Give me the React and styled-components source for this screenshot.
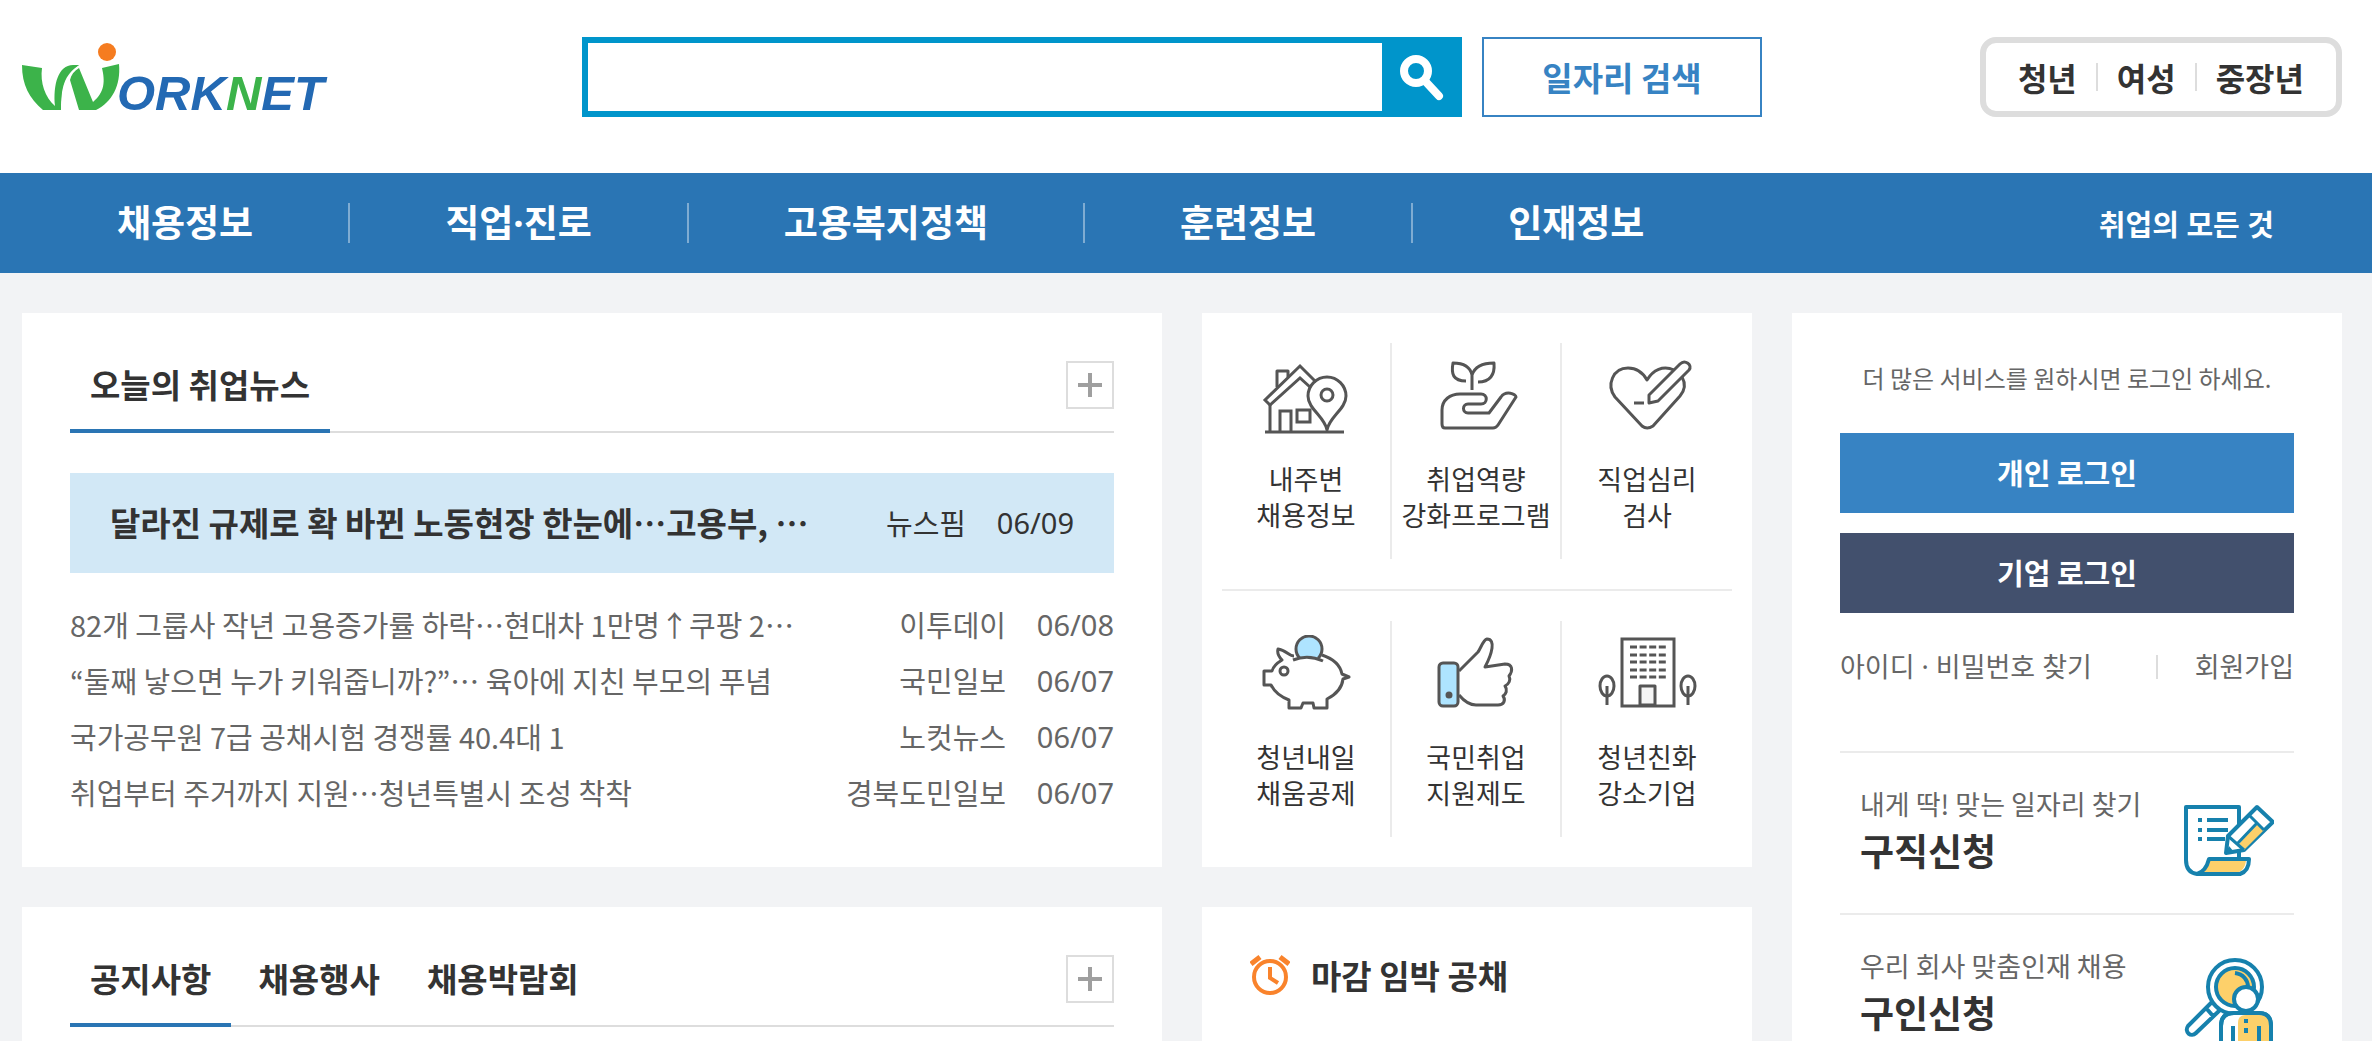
import React, { useState } from "react";
import styled, { createGlobalStyle } from "styled-components";

const GlobalStyle = createGlobalStyle`
  * {
    box-sizing: border-box;
  }

  body {
    margin: 0;
    background: #f2f3f5;
    font-family: "Noto Sans CJK KR", "Noto Sans", sans-serif;
    color: #333333;
  }

  ul, p, h1, h2 {
    margin: 0;
    padding: 0;
    list-style: none;
  }

  a {
    color: inherit;
    text-decoration: none;
  }

  button, input {
    font-family: inherit;
    margin: 0;
    padding: 0;
    border-radius: 0;
  }

  svg {
    display: block;
  }
`;

// narrow middle dots and western digits
const latinFirst = `"Noto Sans", "Noto Sans CJK KR", sans-serif`;

const StyledPage = styled.div`
  display: flex;
  flex-direction: column;
  height: 100vh;
  overflow: hidden;
`;

const StyledHeader = styled.header`
  display: flex;
  flex-shrink: 0;
  align-items: flex-start;
  padding: 37px 30px 56px 22px;
  background: #ffffff;
`;

const StyledLogoLink = styled.a`
  flex: 0 1 560px;
  padding-top: 6px;
`;

const StyledSearchForm = styled.form`
  display: flex;
  flex: 0 1 880px;
  height: 80px;
  margin-right: 20px;
`;

const StyledSearchInput = styled.input`
  flex: 1;
  min-width: 0;
  border: 6px solid #0095cb;
  border-right: 0;
  padding: 0 20px;
  font-size: 33px;
  background: #ffffff;
`;

const StyledSearchButton = styled.button`
  display: flex;
  align-items: center;
  justify-content: center;
  width: 80px;
  border: 0;
  background: #0095cb;
`;

const StyledJobSearchButton = styled.button`
  width: 280px;
  height: 80px;
  border: 2px solid #3783c3;
  background: #ffffff;
  font-size: 33px;
  font-weight: 700;
  color: #3783c3;
`;

const StyledAgeMenu = styled.ul`
  display: flex;
  align-items: center;
  height: 80px;
  margin-left: auto;
  padding: 0 13px;
  border: 6px solid #dddddd;
  border-radius: 16px;
`;

const StyledAgeItem = styled.li`
  padding: 0 19px;
  border-left: ${({ $first }) => ($first ? "0" : "2px solid #dddddd")};
  font-size: 32px;
  font-weight: 700;
  line-height: 28px;
`;

const StyledNav = styled.nav`
  display: flex;
  flex-shrink: 0;
  align-items: center;
  height: 100px;
  padding: 0 30px 0 22px;
  background: #2a75b4;
  color: #ffffff;
  font-family: ${latinFirst};
  font-weight: 700;
`;

const StyledNavList = styled.ul`
  display: flex;
`;

const StyledNavItem = styled.li`
  padding: 0 95px;
  border-left: ${({ $first }) => ($first ? "0" : "2px solid #7facd2")};
  font-size: 37px;
  line-height: 40px;
`;

const StyledNavAll = styled.a`
  margin-left: auto;
  padding-right: 68px;
  font-size: 29px;
`;

const StyledMain = styled.main`
  display: grid;
  flex: 1;
  grid-template-columns: 1140fr 550fr 550fr;
  grid-template-rows: auto 1fr;
  gap: 40px;
  padding: 40px 30px 0 22px;
`;

const StyledCard = styled.section`
  min-width: 0;
  padding: ${({ $padding }) => $padding || "0 48px"};
  background: #ffffff;
`;

const StyledTabBar = styled.div`
  display: flex;
  align-items: flex-end;
  height: 120px;
  border-bottom: 2px solid #dddddd;
`;

const StyledTabs = styled.div`
  display: flex;
  gap: 7px;
  margin-bottom: -2px;
`;

const StyledTab = styled.button`
  height: 92px;
  padding: 0 20px 2px;
  border: 0;
  border-bottom: 4px solid ${({ $active }) => ($active ? "#2a75b4" : "transparent")};
  background: none;
  font-size: 33px;
  font-weight: 700;
  color: #333333;
`;

const StyledMoreButton = styled.button`
  display: flex;
  align-items: center;
  justify-content: center;
  width: 48px;
  height: 48px;
  margin-left: auto;
  margin-bottom: 22px;
  border: 2px solid #dddddd;
  background: #ffffff;
`;

const StyledHeadline = styled.a`
  display: flex;
  align-items: center;
  height: 100px;
  margin-top: 40px;
  padding: 0 40px 2px;
  background: #d2e8f6;
  color: #333333;
`;

const StyledHeadlineTitle = styled.strong`
  flex: 1;
  min-width: 0;
  font-size: 33px;
  font-weight: 700;
  white-space: nowrap;
`;

const StyledNewsList = styled.ul`
  padding: 23px 0 47px;
  color: #666666;
`;

const StyledNewsRow = styled.a`
  display: flex;
  align-items: center;
  height: 56px;
`;

const StyledNewsTitle = styled.span`
  flex: 1;
  min-width: 0;
  font-size: 29px;
  white-space: nowrap;
`;

const StyledNewsSource = styled.span`
  font-size: 29px;
  white-space: nowrap;
`;

const StyledNewsDate = styled.span`
  width: 108px;
  font-family: ${latinFirst};
  font-size: 29px;
  text-align: right;
`;

const StyledServiceRow = styled.ul`
  display: grid;
  grid-template-columns: repeat(3, 1fr);

  & + & {
    margin-top: 30px;
    padding-top: 30px;
    border-top: 2px solid #ebebeb;
  }
`;

const StyledService = styled.li`
  height: 216px;
  padding-top: 14px;
  border-right: ${({ $last }) => ($last ? "0" : "2px solid #ebebeb")};
  font-size: 27px;
  line-height: 36px;
  text-align: center;
  white-space: pre-line;

  svg {
    margin: 0 auto 24px;
  }
`;

const StyledDeadlineTitle = styled.h2`
  display: flex;
  align-items: center;
  gap: 21px;
  font-size: 33px;
  font-weight: 700;
  line-height: 48px;
`;

const StyledAside = styled(StyledCard)`
  grid-column: 3;
  grid-row: 1 / span 2;
`;

const StyledLoginText = styled.p`
  padding-top: 45px;
  margin-bottom: 35px;
  font-size: 24px;
  line-height: 40px;
  text-align: center;
  white-space: nowrap;
  color: #666666;
`;

const StyledLoginButton = styled.button`
  display: block;
  width: 100%;
  height: 80px;
  margin-bottom: 20px;
  padding-bottom: 2px;
  border: 0;
  background: ${({ $color }) => $color};
  font-size: 29px;
  font-weight: 700;
  color: #ffffff;
`;

const StyledLoginLinks = styled.div`
  display: flex;
  justify-content: space-between;
  margin-top: 42px;
  padding-bottom: 72px;
  font-family: ${latinFirst};
  font-size: 27px;
  line-height: 24px;
  color: #666666;
`;

const StyledJoinLink = styled.a`
  padding-left: 37px;
  border-left: 2px solid #dddddd;
`;

const StyledApply = styled.a`
  display: flex;
  justify-content: space-between;
  padding: 31px 20px 33px;
  border-top: 2px solid #ebebeb;

  svg {
    margin-top: 12px;
  }
`;

const StyledApplyText = styled.span`
  display: block;
  font-size: 27px;
  line-height: 40px;
  color: #666666;
`;

const StyledApplyTitle = styled.strong`
  display: block;
  font-size: 37px;
  line-height: 52px;
`;

const StyledLogoText = styled.text`
  font-family: "Liberation Sans", Arial, sans-serif;
  font-size: 49px;
  font-weight: 700;
  font-style: italic;
`;

function Logo() {
  return (
    <svg width="304" height="68" viewBox="0 0 304 68" overflow="visible" role="img" aria-label="WORKNET">
      <path
        fill="#3cb34a"
        d="M0 22 L20 25 C18 40 23 54 33 63 C31 42 36 22 51 22 L57 22 C41 31 39 43 39 67 L21 67 C7 55 0 42 0 22 Z"
      />
      <path
        fill="#3cb34a"
        d="M57 25 L71 59 C83 49 83 38 80 25 L97 21 C99 43 90 59 74 67 L57 67 L48 37 C49 32 52 28 57 25 Z"
      />
      <path fill="#3cb34a" d="M46 24 L57 22 C42 32 39 45 39 67 L34 62 C32 45 36 29 46 24 Z" />
      <circle cx="85" cy="9" r="9" fill="#f57c20" />
      <StyledLogoText x="95" y="67" fill="#2369b3">
        ORK<tspan fill="#3cb34a">N</tspan>ET
      </StyledLogoText>
    </svg>
  );
}

function SearchIcon() {
  return (
    <svg width="48" height="48" viewBox="0 0 48 48" fill="none" stroke="#ffffff" strokeLinecap="round">
      <circle cx="18" cy="18" r="12" strokeWidth="8" />
      <path d="M28 29 L41 43" strokeWidth="8" />
    </svg>
  );
}

function PlusIcon() {
  return (
    <svg width="24" height="24" viewBox="0 0 24 24" stroke="#9f9f9f" strokeWidth="4">
      <path d="M12 0 V24 M0 12 H24" />
    </svg>
  );
}

function ServiceIcon({ children }) {
  return (
    <svg
      width="100"
      height="80"
      viewBox="0 0 100 80"
      fill="none"
      stroke="#555555"
      strokeWidth="3"
      strokeLinejoin="round"
    >
      {children}
    </svg>
  );
}

function HouseIcon() {
  return (
    <ServiceIcon>
      <path d="M21 30 V14 H32 V20" />
      <path d="M60 25 L44 9 L9 43 L14 48 L44 21 L54 30" strokeLinejoin="miter" />
      <path d="M14 48 V74 M24 74 V54 H35 V74 M41 53 H54 V65 H41 Z M9 75 H88" strokeLinejoin="miter" />
      <path d="M71 73 C69 60 52 52 52 39 A19 19 0 0 1 90 39 C90 52 73 60 71 73 Z" />
      <circle cx="71" cy="38" r="6" />
    </ServiceIcon>
  );
}

function SproutIcon() {
  return (
    <ServiceIcon>
      <path d="M46 33 V18 C44 9 37 6 27 6 C25 17 27 24 40 24 M46 18 C49 9 57 6 68 6 C69 18 64 25 52 25" />
      <path d="M16 53 C16 43 24 37 34 37 H55 C62 37 62 47 55 47 H42 C36 47 36 56 42 56 H63 L75 40 C80 33 90 37 90 40 L72 68 Q70 71 67 71 H19 Q16 71 16 67 Z" />
    </ServiceIcon>
  );
}

function HeartIcon() {
  return (
    <ServiceIcon>
      <path d="M77 13 C66 8 56 13 50 23 C45 14 39 11 31 11 C16 11 9 28 18 40 L45 69 Q50 73 56 69 L83 39 C88 33 89 27 85 20" />
      <path d="M52 46 V38 L83 7 C88 2 96 8 92 13 L61 44 Z M37 46 H47" />
    </ServiceIcon>
  );
}

function PigIcon() {
  return (
    <ServiceIcon>
      <circle cx="53" cy="14" r="13" fill="#aee4ff" />
      <path
        fill="#ffffff"
        stroke="none"
        d="M38 24 Q53 18 67 25 L66 36 H38 Z"
      />
      <path d="M37 25 Q52 19 67 26" />
      <path d="M38 21 C33 21 30 15 22 14 C21 18 23 22 26 25 C21 28 17 32 16 36 H8 V50 H15 C19 58 25 62 33 65 V73 H45 L47 68 H57 L58 73 H71 V64 C79 60 86 53 87 44 L93 42 L86 39 C84 29 75 23 66 20" />
      <circle cx="28" cy="36" r="4" />
    </ServiceIcon>
  );
}

function ThumbIcon() {
  return (
    <ServiceIcon>
      <rect x="13" y="28" width="19" height="43" rx="4" fill="#aee4ff" />
      <circle cx="23" cy="60" r="2" fill="#555555" />
      <path d="M33 36 L52 17 C55 13 57 5 61 4 C70 4 66 19 59 32 L79 29 C87 29 87 36 83 41 C85 45 83 49 79 51 C82 55 80 59 77 61 C80 65 78 70 72 70 H50 C43 70 38 66 33 60" />
    </ServiceIcon>
  );
}

function BuildingIcon() {
  return (
    <ServiceIcon>
      <rect x="25" y="4" width="52" height="67" strokeLinejoin="miter" />
      {[12, 20, 27, 35, 42].map((y) => (
        <path key={y} d={`M33 ${y} H69`} strokeDasharray="7 2.6" strokeWidth="3" />
      ))}
      <rect x="43" y="51" width="15" height="19" fill="#f5f5f5" />
      <path d="M10 51 V70 M91 51 V70" />
      <ellipse cx="10" cy="51" rx="7" ry="10" />
      <ellipse cx="91" cy="51" rx="7" ry="10" />
    </ServiceIcon>
  );
}

function ClockIcon() {
  return (
    <svg width="40" height="40" viewBox="0 0 40 40" fill="none" stroke="#f9832c" strokeWidth="4">
      <circle cx="20" cy="22" r="16" />
      <path d="M20 12 V23 L28 28" />
      <path d="M1 9 L10 2 M39 9 L30 2" strokeWidth="5" />
    </svg>
  );
}

function ApplyIcon({ children }) {
  return (
    <svg
      width="90"
      height="84"
      viewBox="0 0 90 84"
      fill="none"
      stroke="#1681ad"
      strokeWidth="4"
      strokeLinejoin="round"
    >
      {children}
    </svg>
  );
}

function ResumeIcon() {
  return (
    <ApplyIcon>
      <path d="M18 76 C22 74 24 70 26 65 H62 C61 71 59 74 55 76 Z" fill="#fdd06a" stroke="none" />
      <path d="M55 28 V11 H2 V64 C2 72 6 77 13 78 H56 C62 76 65 70 65 63 H25 C23 71 20 76 13 78 M55 54 V63" />
      <path d="M14 24 H18 M23 24 H44 M14 34 H18 M23 34 H44 M14 43 H18 M23 43 H41" />
      <path d="M73 11 L89 26 L60 54 L42 57 L44 40 Z" fill="#ffffff" />
      <path d="M73 28 L80 34 L60 54 L53 50 Z" fill="#fdd06a" stroke="none" />
      <path d="M65 19 L80 34 M73 27 L53 48 M44 40 L60 54" strokeWidth="3" />
      <path d="M42 57 L45 50 L50 56 Z" fill="#1681ad" stroke="none" />
    </ApplyIcon>
  );
}

function RecruitIcon() {
  return (
    <ApplyIcon>
      <path d="M28 44 L4 68 C0 74 7 80 12 75 L36 52 Z M22 50 L29 58" />
      <circle cx="51" cy="29" r="27" fill="#ffffff" />
      <circle cx="51" cy="29" r="19" fill="#fdd06a" />
      <path d="M51 15 C59 16 64 22 64 29" />
      <circle cx="62" cy="41" r="12" fill="#ffffff" />
      <path d="M37 84 V68 Q37 55 50 55 H75 Q87 55 87 68 V84" fill="#ffffff" />
      <path d="M54 84 V65 Q54 57 62 57 H75 Q86 57 86 68 V84 Z" fill="#fdd06a" stroke="none" />
      <path d="M37 84 V68 Q37 55 50 55 H75 Q87 55 87 68 V84 M49 68 V84 M75 68 V84 M62 61 V65 M62 70 V75" />
    </ApplyIcon>
  );
}

const navItems = ["채용정보", "직업·진로", "고용복지정책", "훈련정보", "인재정보"];

const ageItems = ["청년", "여성", "중장년"];

const news = [
  { title: "82개 그룹사 작년 고용증가률 하락⋯현대차 1만명↑쿠팡 2⋯", source: "이투데이", date: "06/08" },
  { title: "“둘째 낳으면 누가 키워줍니까?”⋯ 육아에 지친 부모의 푸념", source: "국민일보", date: "06/07" },
  { title: "국가공무원 7급 공채시험 경쟁률 40.4대 1", source: "노컷뉴스", date: "06/07" },
  { title: "취업부터 주거까지 지원⋯청년특별시 조성 착착", source: "경북도민일보", date: "06/07" },
];

const serviceRows = [
  [
    { label: "내주변\n채용정보", Icon: HouseIcon },
    { label: "취업역량\n강화프로그램", Icon: SproutIcon },
    { label: "직업심리\n검사", Icon: HeartIcon },
  ],
  [
    { label: "청년내일\n채움공제", Icon: PigIcon },
    { label: "국민취업\n지원제도", Icon: ThumbIcon },
    { label: "청년친화\n강소기업", Icon: BuildingIcon },
  ],
];

function TabHeader({ tabs }) {
  const [active, setActive] = useState(0);

  return (
    <StyledTabBar>
      <StyledTabs>
        {tabs.map((tab, index) => (
          <StyledTab key={tab} type="button" $active={index === active} onClick={() => setActive(index)}>
            {tab}
          </StyledTab>
        ))}
      </StyledTabs>
      <StyledMoreButton type="button" aria-label="더보기">
        <PlusIcon />
      </StyledMoreButton>
    </StyledTabBar>
  );
}

function Header() {
  return (
    <StyledHeader>
      <StyledLogoLink href="#">
        <Logo />
      </StyledLogoLink>
      <StyledSearchForm onSubmit={(e) => e.preventDefault()}>
        <StyledSearchInput type="text" name="keyword" aria-label="검색어" />
        <StyledSearchButton type="submit" aria-label="검색">
          <SearchIcon />
        </StyledSearchButton>
      </StyledSearchForm>
      <StyledJobSearchButton type="button">일자리 검색</StyledJobSearchButton>
      <StyledAgeMenu>
        {ageItems.map((item, index) => (
          <StyledAgeItem key={item} $first={index === 0}>
            <a href="#">{item}</a>
          </StyledAgeItem>
        ))}
      </StyledAgeMenu>
    </StyledHeader>
  );
}

function NewsCard() {
  return (
    <StyledCard>
      <TabHeader tabs={["오늘의 취업뉴스"]} />
      <StyledHeadline href="#">
        <StyledHeadlineTitle>달라진 규제로 확 바뀐 노동현장 한눈에⋯고용부, ⋯</StyledHeadlineTitle>
        <StyledNewsSource>뉴스핌</StyledNewsSource>
        <StyledNewsDate>06/09</StyledNewsDate>
      </StyledHeadline>
      <StyledNewsList>
        {news.map((item) => (
          <li key={item.title}>
            <StyledNewsRow href="#">
              <StyledNewsTitle>{item.title}</StyledNewsTitle>
              <StyledNewsSource>{item.source}</StyledNewsSource>
              <StyledNewsDate>{item.date}</StyledNewsDate>
            </StyledNewsRow>
          </li>
        ))}
      </StyledNewsList>
    </StyledCard>
  );
}

function ServiceCard() {
  return (
    <StyledCard $padding="30px 20px">
      {serviceRows.map((row, rowIndex) => (
        <StyledServiceRow key={rowIndex}>
          {row.map(({ label, Icon }, index) => (
            <StyledService key={label} $last={index === row.length - 1}>
              <a href="#">
                <Icon />
                {label}
              </a>
            </StyledService>
          ))}
        </StyledServiceRow>
      ))}
    </StyledCard>
  );
}

function LoginCard() {
  return (
    <StyledAside as="aside">
      <StyledLoginText>더 많은 서비스를 원하시면 로그인 하세요.</StyledLoginText>
      <StyledLoginButton type="button" $color="#3783c3">
        개인 로그인
      </StyledLoginButton>
      <StyledLoginButton type="button" $color="#42506d">
        기업 로그인
      </StyledLoginButton>
      <StyledLoginLinks>
        <a href="#">아이디 · 비밀번호 찾기</a>
        <StyledJoinLink href="#">회원가입</StyledJoinLink>
      </StyledLoginLinks>
      <StyledApply href="#">
        <span>
          <StyledApplyText>내게 딱! 맞는 일자리 찾기</StyledApplyText>
          <StyledApplyTitle>구직신청</StyledApplyTitle>
        </span>
        <ResumeIcon />
      </StyledApply>
      <StyledApply href="#">
        <span>
          <StyledApplyText>우리 회사 맞춤인재 채용</StyledApplyText>
          <StyledApplyTitle>구인신청</StyledApplyTitle>
        </span>
        <RecruitIcon />
      </StyledApply>
    </StyledAside>
  );
}

function App() {
  return (
    <StyledPage>
      <GlobalStyle />
      <Header />
      <StyledNav>
        <StyledNavList>
          {navItems.map((item, index) => (
            <StyledNavItem key={item} $first={index === 0}>
              <a href="#">{item}</a>
            </StyledNavItem>
          ))}
        </StyledNavList>
        <StyledNavAll href="#">취업의 모든 것</StyledNavAll>
      </StyledNav>
      <StyledMain>
        <NewsCard />
        <ServiceCard />
        <LoginCard />
        <StyledCard>
          <TabHeader tabs={["공지사항", "채용행사", "채용박람회"]} />
        </StyledCard>
        <StyledCard $padding="44px 48px">
          <StyledDeadlineTitle>
            <ClockIcon />
            마감 임박 공채
          </StyledDeadlineTitle>
        </StyledCard>
      </StyledMain>
    </StyledPage>
  );
}

export default App;
